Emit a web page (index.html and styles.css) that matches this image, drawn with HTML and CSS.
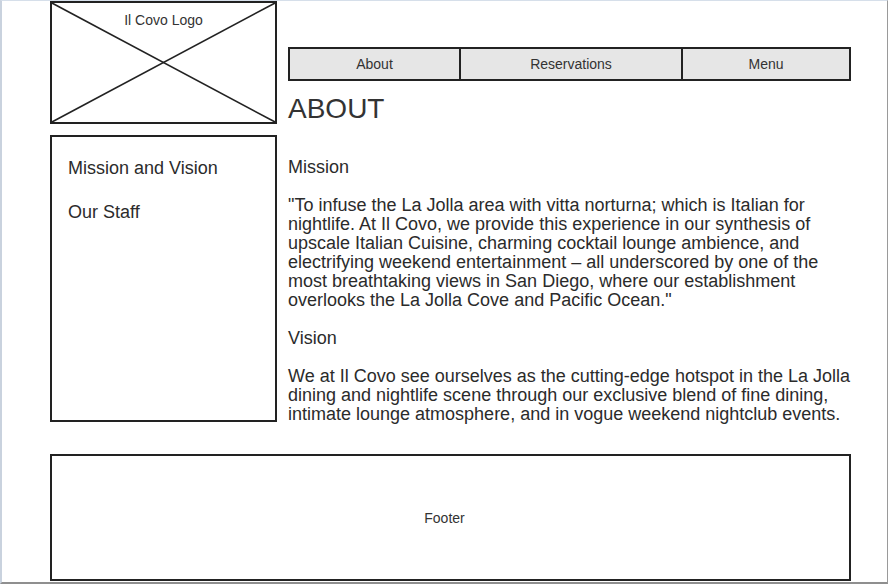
FILE: index.html
```html
<!DOCTYPE html>
<html lang="en">
<head>
    <meta charset="UTF-8">
    <meta name="viewport" content="width=device-width, initial-scale=1.0">
    <title>Il Covo - About</title>
    <link rel="stylesheet" href="styles.css">
</head>
<body>

<div class="frame">
    <div class="layout">
        <div class="logo">
            <svg class="logo-x" viewBox="0 0 100 100" preserveAspectRatio="none">
                <line x1="0" y1="0" x2="100" y2="100" vector-effect="non-scaling-stroke"/>
                <line x1="100" y1="0" x2="0" y2="100" vector-effect="non-scaling-stroke"/>
            </svg>
            <span class="logo-label">Il Covo Logo</span>
        </div>

        <div class="top">
            <nav class="nav">
                <a class="nav-about">About</a>
                <a class="nav-res">Reservations</a>
                <a class="nav-menu">Menu</a>
            </nav>
            <h1>ABOUT</h1>
        </div>

        <aside class="sidebar">
            <a>Mission and Vision</a>
            <a>Our Staff</a>
        </aside>

        <main class="content">
            <p>Mission</p>
            <p>"To infuse the La Jolla area with vitta norturna; which is Italian for nightlife. At Il Covo, we provide this experience in our synthesis of upscale Italian Cuisine, charming cocktail lounge ambience, and electrifying weekend entertainment &ndash; all underscored by one of the most breathtaking views in San Diego, where our establishment overlooks the La Jolla Cove and Pacific Ocean."</p>
            <p>Vision</p>
            <p>We at Il Covo see ourselves as the cutting-edge hotspot in the La Jolla dining and nightlife scene through our exclusive blend of fine dining, intimate lounge atmosphere, and in vogue weekend nightclub events.</p>
        </main>
    </div>

    <footer class="footer">Footer</footer>
</div>

</body>
</html>
```

FILE: styles.css
```css
body {
    margin: 0;
    padding: 0;
    background: white;
    font-family: "Liberation Sans", Arial, sans-serif;
    color: #2b2b2b;
}
.frame {
    box-sizing: border-box;
    width: 888px;
    height: 584px;
    border-top: 1px solid #d6dfea;
    border-left: 2px solid #c9d2de;
    border-right: 1px solid #9a9a9a;
    border-bottom: 2px solid #8f8f8f;
    padding-left: 48px;
    overflow: hidden;
}
.layout {
    display: grid;
    grid-template-columns: 227px 563px;
    column-gap: 11px;
    row-gap: 11px;
}
.logo {
    position: relative;
    box-sizing: border-box;
    height: 123px;
    border: 2px solid #222;
    text-align: center;
}
.logo-x {
    position: absolute;
    top: 0;
    left: 0;
    width: 100%;
    height: 100%;
}
.logo-x line {
    stroke: #222;
    stroke-width: 1.6;
}
.logo-label {
    position: relative;
    display: block;
    padding-top: 9px;
    font-size: 14px;
    line-height: 16px;
    color: #333;
}
.top {
    padding-top: 46px;
}
.nav {
    display: flex;
    height: 34px;
    box-sizing: border-box;
    border: 2px solid #222;
    background: #e6e6e6;
}
.nav a {
    display: flex;
    align-items: center;
    justify-content: center;
    font-size: 14px;
    color: #333;
    cursor: pointer;
}
.nav-about {
    width: 169px;
    border-right: 2px solid #222;
}
.nav-res {
    width: 220px;
    border-right: 2px solid #222;
}
.nav-menu {
    flex: 1;
}
h1 {
    margin: 12px 0 0;
    font-size: 28px;
    line-height: 31px;
    font-weight: normal;
    color: #333;
}
.sidebar {
    box-sizing: border-box;
    height: 287px;
    border: 2px solid #222;
    padding: 20px 0 0 16px;
    display: flex;
    flex-direction: column;
    gap: 22px;
}
.sidebar a {
    font-size: 18px;
    line-height: 22px;
    cursor: pointer;
}
.content {
    padding-top: 23px;
    font-size: 18px;
    line-height: 19px;
}
.content p {
    margin: 0 0 19px;
}
.content p:last-child {
    margin-bottom: 0;
}
.footer {
    box-sizing: border-box;
    width: 801px;
    height: 127px;
    margin-top: 30px;
    border: 2px solid #222;
    display: flex;
    align-items: center;
    justify-content: center;
    padding-right: 12px;
    font-size: 14px;
    color: #333;
}
```
